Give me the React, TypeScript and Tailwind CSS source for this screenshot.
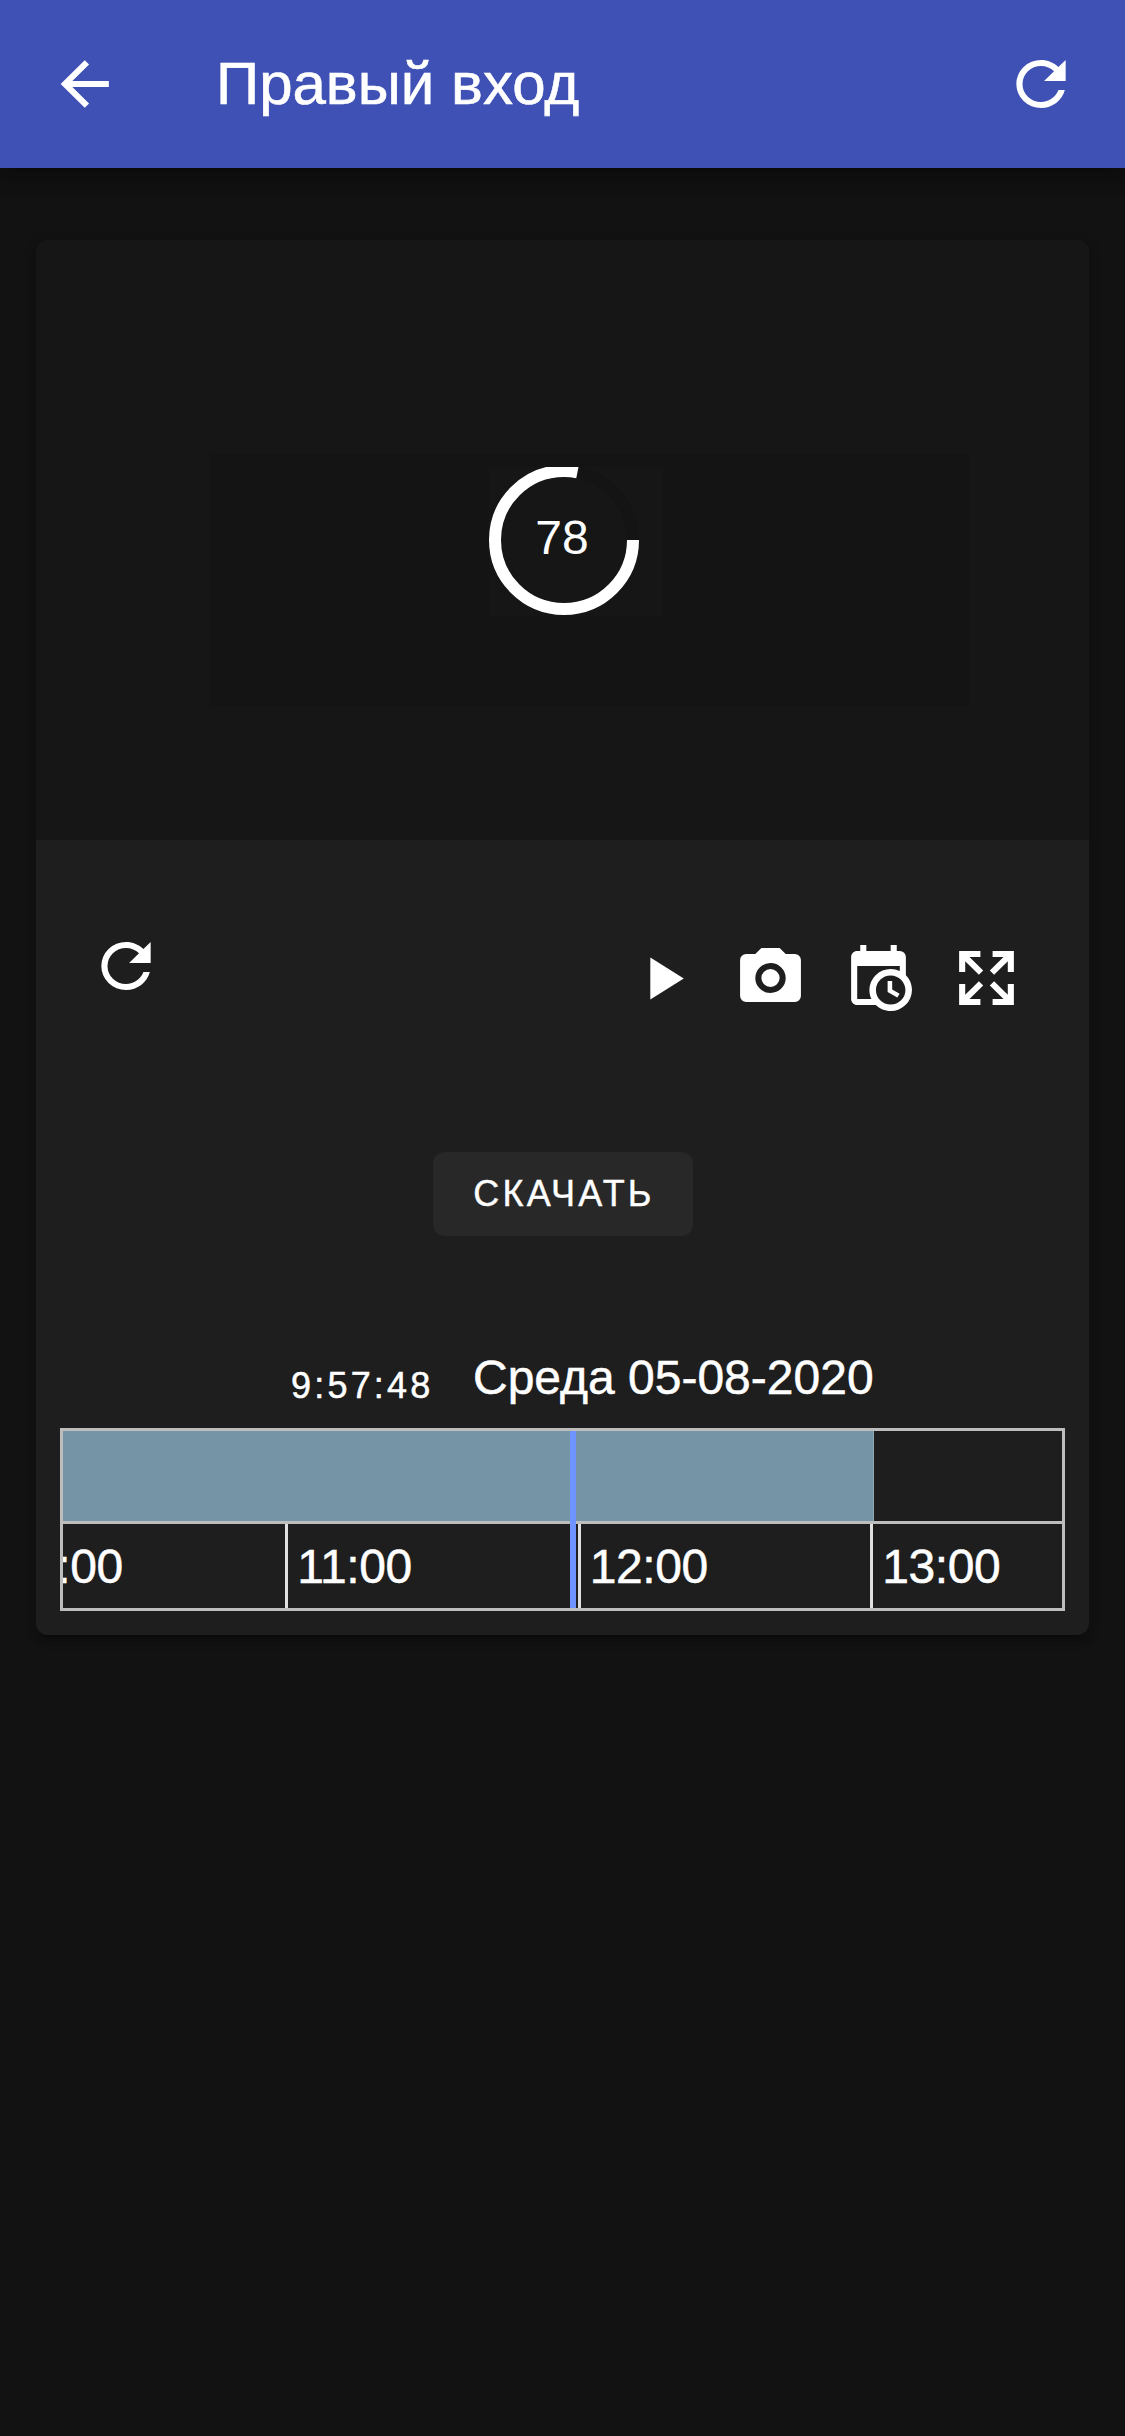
import type { ReactNode } from "react";

const REFRESH =
  "M17.65,6.35C16.2,4.9 14.21,4 12,4A8,8 0 0,0 4,12A8,8 0 0,0 12,20C15.73,20 18.84,17.45 19.73,14H17.65C16.83,16.33 14.61,18 12,18A6,6 0 0,1 6,12A6,6 0 0,1 12,6C13.66,6 15.14,6.69 16.22,7.78L13,11H20V4L17.65,6.35Z";
const ARROW_LEFT =
  "M20,11V13H8L13.5,18.5L12.08,19.92L4.16,12L12.08,4.08L13.5,5.5L8,11H20Z";
const PLAY = "M8,5.14V19.14L19,12.14L8,5.14Z";
const CAMERA =
  "M4,4H7L9,2H15L17,4H20A2,2 0 0,1 22,6V18A2,2 0 0,1 20,20H4A2,2 0 0,1 2,18V6A2,2 0 0,1 4,4M12,7A5,5 0 0,0 7,12A5,5 0 0,0 12,17A5,5 0 0,0 17,12A5,5 0 0,0 12,7M12,9A3,3 0 0,1 15,12A3,3 0 0,1 12,15A3,3 0 0,1 9,12A3,3 0 0,1 12,9Z";
const CALENDAR_CLOCK =
  "M15,13H16.5V15.82L18.94,17.23L18.19,18.53L15,16.69V13M19,8H5V19H9.67C9.24,18.09 9,17.07 9,16A7,7 0 0,1 16,9C17.07,9 18.09,9.24 19,9.67V8M5,21C3.89,21 3,20.1 3,19V5C3,3.89 3.89,3 5,3H6V1H8V3H16V1H18V3H19A2,2 0 0,1 21,5V11.1C22.24,12.36 23,14.09 23,16A7,7 0 0,1 16,23C14.09,23 12.36,22.24 11.1,21H5M16,11.15A4.85,4.85 0 0,0 11.15,16C11.15,18.68 13.32,20.85 16,20.85A4.85,4.85 0 0,0 20.85,16C20.85,13.32 18.68,11.15 16,11.15Z";
const EXPAND =
  "M9.5,13.09L10.91,14.5L6.41,19H10V21H3V14H5V17.59L9.5,13.09M10.91,9.5L9.5,10.91L5,6.41V10H3V3H10V5H6.41L10.91,9.5M14.5,13.09L19,17.59V14H21V21H14V19H17.59L13.09,14.5L14.5,13.09M13.09,9.5L17.59,5H14V3H21V10H19V6.41L14.5,10.91L13.09,9.5Z";

function Icon({ d, wide = false }: { d: string; wide?: boolean }) {
  return (
    <svg
      viewBox="0 0 24 24"
      preserveAspectRatio="none"
      className={wide ? "block h-[72px] w-[74px] fill-white" : "block h-[72px] w-[73px] fill-white"}
    >
      <path d={d} />
    </svg>
  );
}

function IconButton({ label, children }: { label: string; children: ReactNode }) {
  return (
    <button aria-label={label} className="shrink-0">
      {children}
    </button>
  );
}

function Progress({ value }: { value: number }) {
  const length = 2 * Math.PI * 69;
  return (
    <div className="relative flex h-[150px] w-[174px] items-center bg-[#161616]">
      <svg viewBox="0 2 150 148" className="absolute bottom-[2px] left-0 h-[148px] w-[150px] overflow-hidden">
        <circle cx="75" cy="75" r="69" fill="none" stroke="#141414" strokeWidth="12" />
        <circle
          cx="75"
          cy="75"
          r="69"
          fill="none"
          stroke="#fff"
          strokeWidth="12"
          strokeDasharray={`${(length * value) / 100} ${length}`}
        />
      </svg>
      <span className="relative -top-[4px] w-[146px] text-center text-[48px] leading-none">{value}</span>
    </div>
  );
}

const HOURS = ["10:00", "11:00", "12:00", "13:00"];

function Timeline() {
  return (
    <div className="relative mx-6 h-[183px] overflow-hidden border-[3px] border-[#bdbdbd]">
      <div className="h-[93px] border-b-[3px] border-[#bdbdbd]">
        <div className="h-full w-[810.5px] border-r border-[#90a9b5] bg-[#7595a6]" />
      </div>
      <div className="-ml-[70.3px] flex h-[84px]">
        {HOURS.map((hour) => (
          <div
            key={hour}
            className="h-full w-[292.5px] shrink-0 border-l-[3px] border-[#e0e0e0] pl-[9px] text-[48px] leading-[86px] tracking-[-0.4px] [-webkit-text-stroke:0.5px_white]"
          >
            {hour}
          </div>
        ))}
      </div>
      <div className="absolute inset-y-0 left-[507px] w-[6px] bg-[#6f94ff]" />
    </div>
  );
}

export default function App() {
  return (
    <div className="h-[2436px] w-[1125px] overflow-hidden bg-[#121212] font-['Liberation_Sans',Arial,sans-serif] text-white">
      <header className="relative flex h-[168px] items-center bg-[#3f51b5] pl-12 pr-[47px] shadow-[0_6px_12px_-3px_rgba(0,0,0,0.2),0_12px_15px_0_rgba(0,0,0,0.14),0_3px_30px_0_rgba(0,0,0,0.12)]">
        <IconButton label="Назад">
          <Icon d={ARROW_LEFT} />
        </IconButton>
        <h1 className="ml-[95px] flex-1 text-[60px] leading-[90px] [-webkit-text-stroke:0.6px_white]">
          Правый вход
        </h1>
        <IconButton label="Обновить">
          <Icon d={REFRESH} wide />
        </IconButton>
      </header>

      <main className="px-9 pt-[72px]">
        <section className="h-[1395px] rounded-[12px] bg-[#1e1e1e] shadow-[0_9px_3px_-6px_rgba(0,0,0,0.2),0_6px_6px_0_rgba(0,0,0,0.14),0_3px_15px_0_rgba(0,0,0,0.12)]">
          <div className="h-[600px] rounded-t-[12px] bg-[#161616] pl-[174px] pt-[214px]">
            <div className="h-[252px] w-[759px] bg-[#141414] pl-[279px] pt-[13px]">
              <Progress value={78} />
            </div>
          </div>

          <div className="flex h-[312px] items-start justify-between pl-[53px] pr-[66px] pt-[90px]">
            <IconButton label="Обновить видео">
              <Icon d={REFRESH} wide />
            </IconButton>
            <div className="flex gap-[35px] pt-3">
              <IconButton label="Воспроизвести">
                <Icon d={PLAY} />
              </IconButton>
              <IconButton label="Снимок">
                <Icon d={CAMERA} />
              </IconButton>
              <IconButton label="Выбрать время">
                <Icon d={CALENDAR_CLOCK} />
              </IconButton>
              <IconButton label="Во весь экран">
                <Icon d={EXPAND} />
              </IconButton>
            </div>
          </div>

          <div className="flex justify-center">
            <button className="h-[84px] w-[260px] rounded-[12px] bg-[#282828] pl-[3px] text-[36px] leading-[84px] tracking-[3.2px] [-webkit-text-stroke:0.4px_white]">
              СКАЧАТЬ
            </button>
          </div>

          <div className="flex h-[192px] pl-[255px] pt-[106px] [-webkit-text-stroke:0.5px_white]">
            <span className="w-[182px] pt-[8px] text-[36px] leading-[72px] tracking-[3.2px]">9:57:48</span>
            <span className="text-[48px] leading-[72px]">Среда 05-08-2020</span>
          </div>

          <Timeline />
        </section>
      </main>
    </div>
  );
}
